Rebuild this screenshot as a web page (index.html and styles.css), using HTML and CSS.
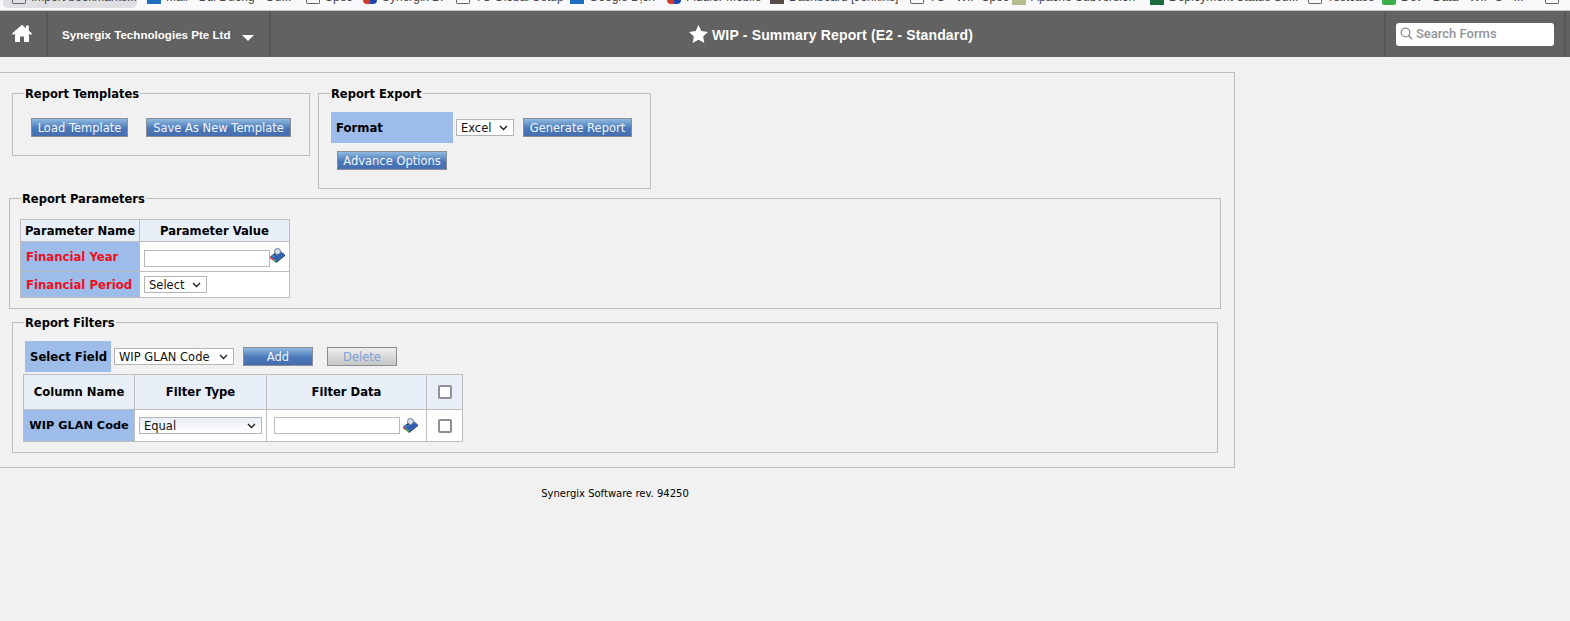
FILE: index.html
```html
<!DOCTYPE html>
<html lang="en">
<head>
    <meta charset="UTF-8">
    <title>WIP - Summary Report (E2 - Standard)</title>
    <link rel="stylesheet" href="styles.css">
</head>
<body>
    <div class="bookmarks">
        <div class="bm bm-active"><span class="bm-icon bm-folder"></span><span class="bm-text">Import bookmarks...</span></div>
        <div class="bm"><span class="bm-icon bm-blue"></span><span class="bm-text">Mail - Bui Duong - Ou...</span></div>
        <div class="bm"><span class="bm-icon bm-folder"></span><span class="bm-text">Spec</span></div>
        <div class="bm"><span class="bm-icon bm-red"></span><span class="bm-text">Synergix BI</span></div>
        <div class="bm"><span class="bm-icon bm-folder"></span><span class="bm-text">TC Global Setup</span></div>
        <div class="bm"><span class="bm-icon bm-blue"></span><span class="bm-text">Google Dịch</span></div>
        <div class="bm"><span class="bm-icon bm-red"></span><span class="bm-text">Fiddler Mobile</span></div>
        <div class="bm"><span class="bm-icon bm-dark"></span><span class="bm-text">Dashboard [Jenkins]</span></div>
        <div class="bm"><span class="bm-icon bm-folder"></span><span class="bm-text">TC - WIP Spec</span></div>
        <div class="bm"><span class="bm-icon bm-olive"></span><span class="bm-text">Apache Subversion</span></div>
        <div class="bm"><span class="bm-icon bm-green"></span><span class="bm-text">Deployment Status Su...</span></div>
        <div class="bm"><span class="bm-icon bm-folder"></span><span class="bm-text">Testcase</span></div>
        <div class="bm"><span class="bm-icon bm-lime"></span><span class="bm-text">Dev - Data - WIP S - III</span></div>
        <div class="bm"><span class="bm-icon bm-folder"></span></div>
    </div>

    <header class="topbar">
        <a class="home-cell">
            <svg class="home-icon" viewBox="0 0 20 18"><path d="M10 .8 0 9.600l1.200 1.300L3 9.400V18h5v-5.500h4V18h5V9.400l1.800 1.500L20 9.600 16.800 6.800V1.500H14v2.800z" fill="#fff"/></svg>
        </a>
        <div class="company-cell">
            <span class="company-name">Synergix Technologies Pte Ltd</span>
            <span class="caret"></span>
        </div>
        <div class="page-title">
            <svg class="star-icon" viewBox="0 0 20 19"><path d="M10 0l3 6.400 7 .9-5.100 4.800 1.300 6.900L10 15.600 3.800 19l1.300-6.900L0 7.300l7-.9z" fill="#fff"/></svg>
            <span>WIP - Summary Report (E2 - Standard)</span>
        </div>
        <div class="search-cell">
            <div class="search-box">
                <svg class="search-icon" viewBox="0 0 13 13"><circle cx="5.500" cy="5.500" r="4.300" fill="none" stroke="#8a8f94" stroke-width="1.300"/><path d="M8.600 8.600 12.300 12.300" stroke="#8a8f94" stroke-width="1.500"/></svg>
                <span class="search-text">Search Forms</span>
            </div>
        </div>
        <div class="end-cell"></div>
    </header>

    <main class="report-panel">
        <div class="top-groups">
            <fieldset class="group group-templates">
                <legend>Report Templates</legend>
                <div class="template-buttons">
                    <button class="btn btn-load">Load Template</button>
                    <button class="btn btn-save">Save As New Template</button>
                </div>
            </fieldset>
            <fieldset class="group group-export">
                <legend>Report Export</legend>
                <div class="export-row">
                    <div class="label-cell format-label">Format</div>
                    <select class="sel sel-format"><option>Excel</option></select>
                    <button class="btn btn-generate">Generate Report</button>
                </div>
                <button class="btn btn-advance">Advance Options</button>
            </fieldset>
        </div>

        <fieldset class="group group-params">
            <legend>Report Parameters</legend>
            <table class="grid">
                <tr>
                    <th class="col-pname">Parameter Name</th>
                    <th class="col-pvalue">Parameter Value</th>
                </tr>
                <tr class="row-year">
                    <td class="label-cell required">Financial Year</td>
                    <td class="value-cell"><span class="lookup"><input class="txt" type="text"><svg class="lookup-icon" viewBox="0 0 15 15"><use href="#lookup"/></svg></span></td>
                </tr>
                <tr class="row-period">
                    <td class="label-cell required">Financial Period</td>
                    <td class="value-cell"><select class="sel sel-period"><option>Select</option></select></td>
                </tr>
            </table>
        </fieldset>

        <fieldset class="group group-filters">
            <legend>Report Filters</legend>
            <div class="filter-bar">
                <div class="label-cell field-label">Select Field</div>
                <select class="sel sel-field"><option>WIP GLAN Code</option></select>
                <button class="btn btn-add">Add</button>
                <button class="btn btn-delete">Delete</button>
            </div>
            <table class="grid filter-grid">
                <tr class="row-head">
                    <th class="col-cname">Column Name</th>
                    <th class="col-ftype">Filter Type</th>
                    <th class="col-fdata">Filter Data</th>
                    <th class="col-check"><input class="chk" type="checkbox"></th>
                </tr>
                <tr class="row-filter">
                    <td class="label-cell center">WIP GLAN Code</td>
                    <td class="value-cell"><select class="sel sel-type"><option>Equal</option></select></td>
                    <td class="value-cell data-cell"><span class="lookup"><input class="txt" type="text"><svg class="lookup-icon lookup-gap" viewBox="0 0 15 15"><use href="#lookup"/></svg></span></td>
                    <td class="check-cell"><input class="chk" type="checkbox"></td>
                </tr>
            </table>
        </fieldset>
    </main>

    <footer class="rev">Synergix Software rev. 94250</footer>

    <svg class="defs" width="0" height="0">
        <symbol id="lookup" viewBox="0 0 15 15">
            <path d="M0 8.500 9 2l6 4.500-9 6.500z" fill="#2b62b4"/>
            <path d="M3 8.500 10 3.800" stroke="#7fb0e8" stroke-width="1.200"/>
            <path d="M0 8.500l3 2.100v2L0 10.500z" fill="#c94a3a"/>
            <path d="M3 10.600 6 13v2l-3-2.400z" fill="#4aa04a"/>
            <path d="M6 13l9-6.500V8l-9 7z" fill="#1d3f7c"/>
            <circle cx="7.500" cy="3.500" r="3" fill="#d5deec" stroke="#65748e" stroke-width="1"/>
            <path d="M5.500 5.800 4 7.500" stroke="#2c3038" stroke-width="1.200"/>
        </symbol>
    </svg>
</body>
</html>
```

FILE: styles.css
```css
* {
    box-sizing: border-box;
}
html, body {
    height: 100%;
    overflow: hidden;
}
body {
    margin: 0;
    background-color: #f1f1f1;
    font-family: "DejaVu Sans", Verdana, sans-serif;
    font-size: 11px;
    color: #000;
}
.bookmarks {
    display: flex;
    height: 11px;
    background-color: #f9f9fb;
    border-bottom: 1px solid #c8c8c8;
    overflow: hidden;
    font-family: "Liberation Sans", Arial, sans-serif;
    font-size: 12px;
    color: #444;
}
.bm {
    display: flex;
    align-items: flex-start;
    gap: 5px;
    flex: none;
    height: 10px;
    white-space: nowrap;
    overflow: hidden;
}
.bm:nth-child(2) { width: 159px; }
.bm:nth-child(3) { width: 57px; }
.bm:nth-child(4) { width: 93px; }
.bm:nth-child(5) { width: 114px; }
.bm:nth-child(6) { width: 97px; }
.bm:nth-child(7) { width: 103px; }
.bm:nth-child(8) { width: 140px; }
.bm:nth-child(9) { width: 102px; }
.bm:nth-child(10) { width: 138px; }
.bm:nth-child(11) { width: 158px; }
.bm:nth-child(12) { width: 74px; }
.bm:nth-child(13) { width: 163px; }
.bm-active {
    width: 134px;
    height: 8px;
    margin: 0 10px 0 3px;
    padding-left: 9px;
    background-color: #dedee3;
    border-radius: 0 0 5px 5px;
}
.bm-text {
    line-height: 14px;
    margin-top: -10px;
}
.bm-icon {
    width: 14px;
    height: 4px;
    flex: none;
}
.bm-blue { background-color: #1f6fc0; }
.bm-red {
    background: linear-gradient(90deg, #d0392b 50%, #1c45b0 50%);
    border-radius: 0 0 7px 7px;
}
.bm-dark { background-color: #5a4a4a; }
.bm-olive { background-color: #b5bc8e; height: 5px; }
.bm-green { background-color: #1d6b3a; height: 5px; }
.bm-lime { background-color: #3fae4a; height: 5px; border-radius: 0 0 2px 2px; }
.bm-folder {
    border: 1px solid #666;
    border-top: 0;
    border-radius: 0 0 2px 2px;
}

.topbar {
    display: flex;
    height: 46px;
    background-color: #626262;
    color: #fff;
    font-family: "Liberation Sans", Arial, sans-serif;
    font-weight: bold;
}
.home-cell {
    display: flex;
    align-items: center;
    width: 48px;
    padding: 0 0 3px 12px;
    border-right: 2px solid #575757;
    flex: none;
}
.home-icon {
    width: 20px;
    height: 18px;
}
.company-cell {
    display: flex;
    align-items: center;
    width: 223px;
    padding-left: 14px;
    border-right: 2px solid #575757;
    flex: none;
    font-size: 11.600px;
}
.caret {
    width: 0;
    height: 0;
    margin: 7px 0 0 11px;
    border-left: 6px solid transparent;
    border-right: 6px solid transparent;
    border-top: 6px solid #fff;
}
.page-title {
    flex: 1;
    display: flex;
    align-items: center;
    justify-content: center;
    gap: 4px;
    font-size: 14px;
    letter-spacing: 0.170px;
    padding: 2px 0 0 7px;
}
.star-icon {
    width: 19px;
    height: 18px;
    margin-top: -2px;
}
.search-cell {
    display: flex;
    align-items: center;
    width: 182px;
    height: 100%;
    padding-left: 10px;
    border-left: 2px solid #575757;
    border-right: 2px solid #575757;
    flex: none;
}
.search-box {
    display: flex;
    align-items: center;
    gap: 3px;
    width: 158px;
    height: 23px;
    padding: 0 0 2px 4px;
    background-color: #fff;
    border-radius: 3px;
}
.search-icon {
    width: 13px;
    height: 13px;
}
.search-text {
    color: #8f959b;
    font-family: "Roboto", "Noto Sans", sans-serif;
    font-size: 13px;
    font-weight: 500;
}
.end-cell {
    width: 4px;
    flex: none;
}

.report-panel {
    width: 1235px;
    height: 396px;
    margin-top: 15px;
    padding: 0 0 0 9px;
    border: 1px solid #bdbdbd;
    border-left: 0;
}
.group {
    margin: 0;
    padding: 0;
    border: 1px solid #bdbdbd;
    min-width: 0;
}
.group legend {
    padding: 2px 1px 0;
    font-weight: bold;
    font-size: 11.500px;
    line-height: 13px;
}
.top-groups {
    display: flex;
    align-items: flex-start;
    gap: 8px;
    padding: 13px 0 0 3px;
    height: 118px;
}
.group-templates {
    width: 298px;
    height: 70px;
    padding-left: 18px;
}
.group-templates legend {
    margin-left: -7px;
}
.template-buttons {
    display: flex;
    gap: 18px;
    margin-top: 17px;
}
.group-export {
    width: 333px;
    height: 103px;
    padding-left: 12px;
}
.group-export legend {
    margin-left: -1px;
}
.export-row {
    display: flex;
    align-items: center;
    margin-top: 11px;
}
.label-cell {
    background-color: #9dbcea;
    font-weight: bold;
    font-size: 11.700px;
}
.format-label {
    display: flex;
    align-items: center;
    width: 122px;
    height: 31px;
    padding-left: 5px;
    margin-right: 3px;
}
.sel-format {
    width: 58px;
    margin-right: 9px;
}
.btn {
    height: 19px;
    padding: 1px 0 0;
    border: 1px solid #8b8f94;
    border-radius: 0;
    background: linear-gradient(#8fbae0, #4a78b8 55%, #456db0);
    color: #f2f6fb;
    font-family: "DejaVu Sans", Verdana, sans-serif;
    font-size: 11.500px;
    line-height: 15px;
    white-space: nowrap;
}
.btn-load {
    width: 97px;
}
.btn-save {
    width: 145px;
}
.btn-generate {
    width: 109px;
}
.btn-advance {
    display: block;
    margin: 8px 0 0 6px;
    width: 110px;
}
.sel {
    appearance: none;
    height: 17px;
    padding: 0 0 0 4px;
    background-color: #fff;
    background-image: url("data:image/svg+xml,%3Csvg xmlns='http://www.w3.org/2000/svg' width='9' height='6'%3E%3Cpath d='M1 1l3.500 3.500L8 1' fill='none' stroke='%23222' stroke-width='1.400'/%3E%3C/svg%3E");
    background-repeat: no-repeat;
    background-position: right 5px center;
    border: 1px solid #b5b5b5;
    border-radius: 0;
    color: #111;
    font-family: "DejaVu Sans", Verdana, sans-serif;
    font-size: 11.500px;
}
.group-params {
    width: 1212px;
    height: 118px;
    padding-left: 10px;
}
.group-params legend {
    margin-left: 1px;
}
.grid {
    border-collapse: collapse;
    background-color: #fff;
}
.grid th, .grid td {
    border: 1px solid #bdbdbd;
    padding: 0;
}
.grid th {
    background-color: #e8eff8;
    font-size: 11.600px;
    font-weight: bold;
    height: 22px;
}
.group-params .grid {
    margin-top: 13px;
}
.col-pname {
    width: 119px;
}
.col-pvalue {
    width: 150px;
}
.grid td.label-cell {
    padding-left: 5px;
    white-space: nowrap;
}
.grid td.required {
    color: #ee0f1c;
}
.grid td.center {
    padding: 0;
    text-align: center;
    font-size: 11.300px;
}
.row-year td {
    height: 30px;
}
.row-period td {
    height: 26px;
}
.grid td.value-cell {
    padding-left: 4px;
}
.grid td.data-cell {
    padding-left: 7px;
}
.lookup {
    display: flex;
    align-items: center;
}
.row-year .lookup {
    margin-top: 4px;
}
.txt {
    width: 126px;
    height: 17px;
    padding: 0 2px;
    background-color: #fff;
    border: 1px solid #b9b9b9;
    border-radius: 0;
}
.lookup-icon {
    width: 15px;
    height: 15px;
    margin-top: -6px;
}
.lookup-gap {
    margin: -1px 0 0 3px;
}
.sel-period {
    width: 63px;
}
.group-filters {
    width: 1206px;
    height: 138px;
    margin: 6px 0 0 3px;
    padding-left: 12px;
}
.group-filters legend {
    margin-left: -1px;
}
.filter-bar {
    display: flex;
    align-items: center;
    margin-top: 11px;
}
.field-label {
    display: flex;
    align-items: center;
    width: 86px;
    height: 31px;
    padding-left: 5px;
    margin-right: 3px;
}
.sel-field {
    width: 120px;
    margin-right: 9px;
}
.btn-add {
    width: 70px;
    margin-right: 14px;
}
.btn-delete {
    width: 70px;
    background: linear-gradient(#eeeeee, #c6c6c6);
    color: #7fa2d8;
}
.filter-grid {
    margin: 2px 0 0 -2px;
}
.row-head th {
    height: 35px;
}
.row-filter td {
    height: 32px;
}
.col-cname {
    width: 111px;
}
.col-ftype {
    width: 132px;
}
.col-fdata {
    width: 160px;
}
.col-check {
    width: 36px;
}
.check-cell {
    text-align: center;
}
.chk {
    appearance: none;
    display: block;
    width: 14px;
    height: 14px;
    margin: 0 auto;
    background-color: #fff;
    border: 2px solid #8e8e9a;
    border-radius: 2px;
}
.sel-type {
    width: 123px;
    background-image: url("data:image/svg+xml,%3Csvg xmlns='http://www.w3.org/2000/svg' width='9' height='6'%3E%3Cpath d='M1 1l3.500 3.500L8 1' fill='none' stroke='%23222' stroke-width='1.400'/%3E%3C/svg%3E"), linear-gradient(#e9eef7, #fff);
    background-position: right 5px center, 0 0;
}
.rev {
    width: 1230px;
    margin-top: 20px;
    text-align: center;
    font-size: 10px;
    line-height: 12px;
}
.defs {
    position: absolute;
}
```
